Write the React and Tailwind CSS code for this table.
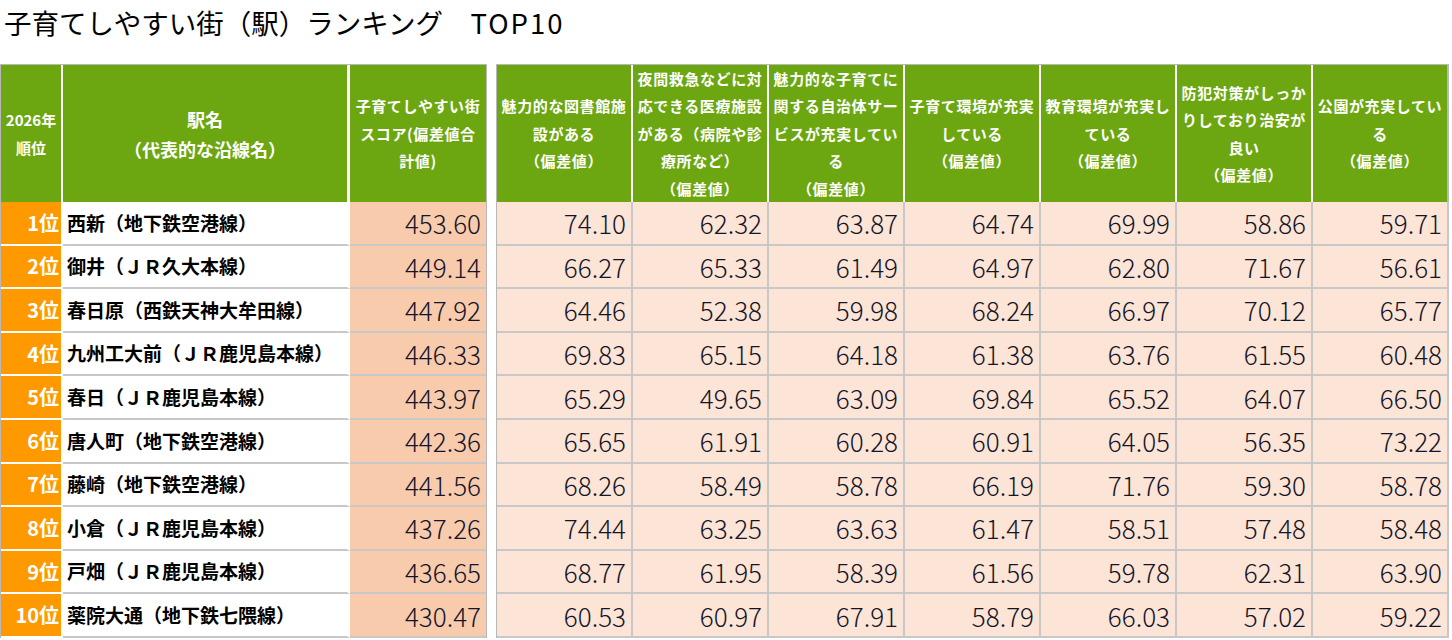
import React from 'react';

const rows = [
  ['1位', '西新（地下鉄空港線）', '453.60', ['74.10', '62.32', '63.87', '64.74', '69.99', '58.86', '59.71']],
  ['2位', '御井（ＪＲ久大本線）', '449.14', ['66.27', '65.33', '61.49', '64.97', '62.80', '71.67', '56.61']],
  ['3位', '春日原（西鉄天神大牟田線）', '447.92', ['64.46', '52.38', '59.98', '68.24', '66.97', '70.12', '65.77']],
  ['4位', '九州工大前（ＪＲ鹿児島本線）', '446.33', ['69.83', '65.15', '64.18', '61.38', '63.76', '61.55', '60.48']],
  ['5位', '春日（ＪＲ鹿児島本線）', '443.97', ['65.29', '49.65', '63.09', '69.84', '65.52', '64.07', '66.50']],
  ['6位', '唐人町（地下鉄空港線）', '442.36', ['65.65', '61.91', '60.28', '60.91', '64.05', '56.35', '73.22']],
  ['7位', '藤崎（地下鉄空港線）', '441.56', ['68.26', '58.49', '58.78', '66.19', '71.76', '59.30', '58.78']],
  ['8位', '小倉（ＪＲ鹿児島本線）', '437.26', ['74.44', '63.25', '63.63', '61.47', '58.51', '57.48', '58.48']],
  ['9位', '戸畑（ＪＲ鹿児島本線）', '436.65', ['68.77', '61.95', '58.39', '61.56', '59.78', '62.31', '63.90']],
  ['10位', '薬院大通（地下鉄七隈線）', '430.47', ['60.53', '60.97', '67.91', '58.79', '66.03', '57.02', '59.22']],
];

const heads = [
  ['魅力的な図書館施', '設がある', '（偏差値）'],
  ['夜間救急などに対', '応できる医療施設', 'がある（病院や診', '療所など）', '（偏差値）'],
  ['魅力的な子育てに', '関する自治体サー', 'ビスが充実してい', 'る', '（偏差値）'],
  ['子育て環境が充実', 'している', '（偏差値）'],
  ['教育環境が充実し', 'ている', '（偏差値）'],
  ['防犯対策がしっか', 'りしており治安が', '良い', '（偏差値）'],
  ['公園が充実してい', 'る', '（偏差値）'],
];

export default function App() {
  return (
    <div className="w-[1452px] h-[640px] overflow-hidden bg-white font-['Noto_Sans_CJK_JP',sans-serif] text-black">
      {/* Title */}
      <div className="h-[64px] pl-[4px] pt-[8px] text-[27.5px] leading-[28px] whitespace-nowrap">
        子育てしやすい街（駅）ランキング　<span className="tracking-[2px]">TOP10</span>
      </div>

      <div className="flex items-start">
        {/* Left table: rank / station / total score */}
        <div className="border-l border-t border-r border-[#b8b8b8]">
          <div className="flex h-[137px] text-white font-bold">
            <div className="w-[62px] border-r-2 border-white bg-[#6ca712] flex flex-col items-center justify-center text-[15px] leading-[28px]">
              <span>2026年</span>
              <span>順位</span>
            </div>
            <div className="w-[287px] border-r-[3px] border-white bg-[#6ca712] flex flex-col items-center justify-center text-[18px] leading-[30px]">
              <span>駅名</span>
              <span>（代表的な沿線名）</span>
            </div>
            <div className="w-[136px] bg-[#6ca712] flex flex-col items-center justify-center text-[15px] leading-[27.5px] tracking-[0.6px] whitespace-nowrap">
              <span>子育てしやすい街</span>
              <span>スコア(偏差値合</span>
              <span>計値)</span>
            </div>
          </div>
          {rows.map(r => (
            <div key={r[0]} className="flex h-[43.6px]">
              <div className="w-[62px] bg-[#ff9900] border-r-2 border-b-2 border-white flex items-center justify-end pr-[2px] text-white font-bold text-[20px]">
                {r[0]}
              </div>
              <div className="w-[287px] border-r-[3px] border-r-white border-b-2 border-b-[#c8c8c8] flex items-center pl-[4px] font-bold text-[19px] whitespace-nowrap">
                {r[1]}
              </div>
              <div className="w-[136px] bg-[#f8cbad] border-b-2 border-[#c8c8c8] flex items-center justify-end pr-[5px] text-[26px] font-light text-[#141428]">
                {r[2]}
              </div>
            </div>
          ))}
        </div>

        {/* Right table: sub scores */}
        <div className="ml-[9px] border-l border-t border-[#b8b8b8]">
          <div className="flex h-[137px] text-white font-bold">
            {heads.map((h, i) => (
              <div
                key={i}
                className={`w-[136px] border-r-2 ${i === 6 ? 'border-[#b8b8b8]' : 'border-white'} bg-[#6ca712] flex flex-col items-center justify-center text-[15px] leading-[27.5px] tracking-[0.6px] whitespace-nowrap`}
              >
                {h.map(line => <span key={line}>{line}</span>)}
              </div>
            ))}
          </div>
          {rows.map(r => (
            <div key={r[0]} className="flex h-[43.6px]">
              {r[3].map((v, i) => (
                <div key={i} className="w-[136px] bg-[#fce4d6] border-r-2 border-b-2 border-[#c8c8c8] flex items-center justify-end pr-[5px] text-[26px] font-light text-[#141428]">
                  {v}
                </div>
              ))}
            </div>
          ))}
        </div>
      </div>
    </div>
  );
}
